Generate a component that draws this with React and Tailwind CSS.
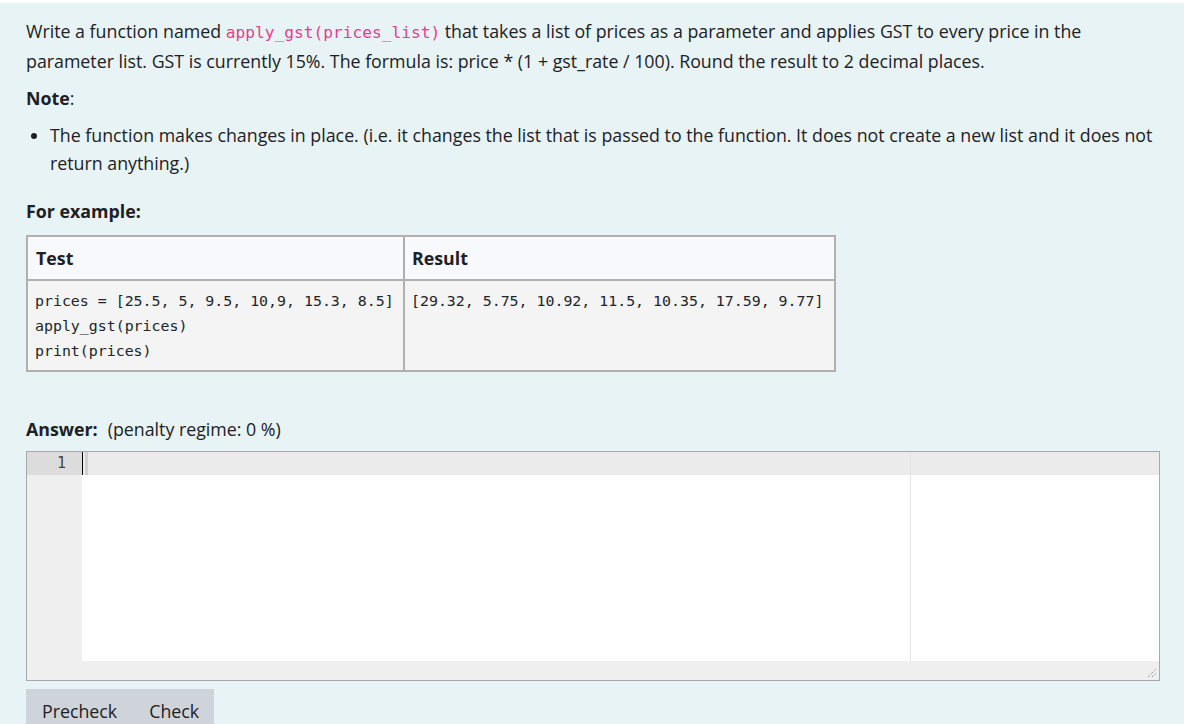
import React from 'react';

const sans = { fontFamily: '"Open Sans", "Noto Sans", sans-serif' };

const App = () => {
  return (
    <div className="w-[1187px] h-[724px] bg-white pt-[3px] pr-[3px] overflow-hidden">
      <div className="h-full bg-[#e7f3f5] pl-[26px] pr-[24px] pt-[14px] text-[#1d2125] font-['Open_Sans',sans-serif] text-[17.8px] leading-[28px]">
        <p>
          Write a function named{' '}
          <code className="font-['DejaVu_Sans_Mono',monospace] text-[16.2px] text-[#e83e8c]">apply_gst(prices_list)</code>{' '}
          that takes a list of prices as a parameter and applies GST to every price in the parameter list. GST is currently 15%. The formula is: price * (1 + gst_rate / 100). Round the result to 2 decimal places.
        </p>
        <p className="mt-[9px]">
          <strong className="font-bold">Note</strong>:
        </p>
        <ul className="mt-[9px] pl-[24px] list-disc">
          <li>
            The function makes changes in place. (i.e. it changes the list that is passed to the function. It does not create a new list and it does not return anything.)
          </li>
        </ul>
        <p className="mt-[20px] font-bold">For example:</p>
        <table className="mt-[10px] border-collapse border-2 border-[#b0b0b0] text-left">
          <thead>
            <tr className="bg-[#f8f9fc]">
              <th className="border-2 border-[#b0b0b0] px-[8px] h-[44px] w-[377px] font-bold">Test</th>
              <th className="border-2 border-[#b0b0b0] px-[7px] h-[44px] w-[431px] font-bold">Result</th>
            </tr>
          </thead>
          <tbody>
            <tr className="bg-[#f4f4f4] align-top font-['DejaVu_Sans_Mono',monospace] text-[14.9px] leading-[25px] text-[#212529]">
              <td className="border-2 border-[#b0b0b0] pl-[7px] pr-[4px] pt-[8px] pb-[6px] whitespace-pre">
                {'prices = [25.5, 5, 9.5, 10,9, 15.3, 8.5]\napply_gst(prices)\nprint(prices)'}
              </td>
              <td className="border-2 border-[#b0b0b0] px-[6px] pt-[8px] pb-[6px] whitespace-pre">
                {'[29.32, 5.75, 10.92, 11.5, 10.35, 17.59, 9.77]'}
              </td>
            </tr>
          </tbody>
        </table>
        <div className="mt-[43px] flex items-baseline gap-[10px]">
          <span className="font-bold">Answer:</span>
          <span>(penalty regime: 0 %)</span>
        </div>
        <div className="mt-[8px] w-[1134px] h-[230px] border border-[#a9a9a9] flex flex-col bg-[#efefef]">
          <div className="flex flex-1">
            <div className="w-[55px] bg-[#efefef] flex flex-col">
              <div className="h-[23px] bg-[#dcdcdc] text-right pr-[16px] font-['DejaVu_Sans_Mono',monospace] text-[15px] leading-[23px] text-[#444]">1</div>
            </div>
            <div className="flex-1 flex flex-col bg-white relative">
              <div className="h-[23px] bg-[#ebebeb] flex">
                <div className="w-[1px] h-[23px] bg-black" />
                <div className="w-[3px] h-[23px] bg-[#d0d0d0] ml-[2px]" />
              </div>
              <div className="absolute left-[828px] top-0 bottom-0 w-[1px] bg-[#e4e4e4]" />
            </div>
          </div>
          <div className="h-[19px] bg-[#efefef] flex justify-end items-end pr-[2px] pb-[2px]">
            <svg width="10" height="10" viewBox="0 0 10 10">
              <path d="M1 9 L9 1 M5 9 L9 5" stroke="#777" strokeWidth="1" strokeDasharray="1 1" />
            </svg>
          </div>
        </div>
        <div className="mt-[8px] w-[188px] h-[40px] bg-[#ced4da] flex items-start gap-[32px] pl-[16px] pt-[10px] text-[17.8px] leading-[24px]" style={sans}>
          <span className="text-[#1d2125]">Precheck</span>
          <span className="text-[#1d2125]">Check</span>
        </div>
      </div>
    </div>
  );
};

export default App;
